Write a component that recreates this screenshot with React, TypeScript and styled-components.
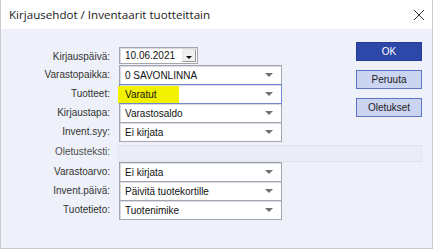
import { Fragment } from 'react';
import styled, { createGlobalStyle } from 'styled-components';

const GlobalStyle = createGlobalStyle`
  html, body {
    margin: 0;
    padding: 0;
    background: #ffffff;
  }
`;

const Window = styled.div`
  width: 431px;
  height: 248px;
  border: 1px solid #c9cbd1;
  border-top: none;
  background: #eef1f9;
  display: flex;
  flex-direction: column;
  font-family: 'Liberation Sans', Arial, sans-serif;
`;

const TitleBar = styled.div`
  height: 29px;
  background: #ffffff;
  display: flex;
  align-items: center;
  justify-content: space-between;
  padding: 0 7px 0 8px;
  flex-shrink: 0;
`;

const Title = styled.span`
  font-family: 'Open Sans', 'Noto Sans', sans-serif;
  font-size: 11.6px;
  color: #1a1a1a;
`;

const CloseIcon = () => (
  <svg width="12" height="12" viewBox="0 0 12 12">
    <path d="M1 1 L11 11 M11 1 L1 11" stroke="#333" strokeWidth="1" fill="none" />
  </svg>
);

const Form = styled.div`
  display: grid;
  grid-template-columns: 118px 163px 1fr;
  grid-template-rows: 18px 19px 19px 19px 19px 21px 19px 19px 19px;
  padding: 18px 10px 0 0;
`;

const Label = styled.div<{ $muted?: boolean; $row: number }>`
  grid-column: 1;
  grid-row: ${(p) => p.$row};
  display: flex;
  align-items: center;
  justify-content: flex-end;
  padding-right: 9px;
  font-size: 10px;
  color: ${(p) => (p.$muted ? '#4d4d4d' : '#333333')};
`;

const Select = styled.div<{ $focus?: boolean; $row: number }>`
  grid-column: 2;
  grid-row: ${(p) => p.$row};
  box-sizing: border-box;
  height: 20px;
  background: #ffffff;
  border: 1px solid ${(p) => (p.$focus ? '#6f86d2' : '#a3a6ae')};
  box-shadow: inset 1px 1px 0 #d9dbe0;
  display: flex;
  align-items: center;
  justify-content: space-between;
  padding: 0 8px 0 5px;
  font-size: 10px;
  color: #111;
  position: relative;
  z-index: ${(p) => (p.$focus ? 2 : 1)};
`;

const Arrow = styled.span`
  width: 0;
  height: 0;
  border-left: 4px solid transparent;
  border-right: 4px solid transparent;
  border-top: 4px solid #707070;
`;

const Highlight = styled.span`
  background: #f2f200;
  margin-left: -7px;
  padding: 3px 22px 3px 7px;
  margin-top: 1px;
`;

const DateBox = styled.div`
  grid-column: 2;
  grid-row: 1;
  box-sizing: border-box;
  width: 79px;
  height: 17px;
  background: #ffffff;
  border: 1px solid #a3a6ae;
  box-shadow: inset 1px 1px 0 #d9dbe0;
  display: flex;
  align-items: center;
  justify-content: space-between;
  padding: 0 1px 0 5px;
  font-size: 10px;
  color: #111;
`;

const DateButton = styled.span`
  box-sizing: border-box;
  width: 14px;
  height: 13px;
  background: #f0f0f0;
  border: 1px solid #9a9a9a;
  border-top-color: #e8e8e8;
  border-left-color: #e8e8e8;
  display: flex;
  align-items: center;
  justify-content: center;
`;

const SmallArrow = styled.span`
  width: 0;
  height: 0;
  margin-top: 3px;
  border-left: 3px solid transparent;
  border-right: 3px solid transparent;
  border-top: 3px solid #111;
`;

const TextField = styled.div`
  grid-column: 2 / 4;
  grid-row: 6;
  margin: 4px 0 0 -1px;
  box-sizing: border-box;
  height: 17px;
  background: #eaedf5;
  border: 1px solid #dfe3ee;
`;

const Buttons = styled.div`
  grid-column: 3;
  grid-row: 1 / span 5;
  justify-self: end;
  align-self: start;
  margin-top: -5px;
  display: flex;
  flex-direction: column;
  gap: 9px;
`;

const Button = styled.div<{ $primary?: boolean }>`
  box-sizing: border-box;
  width: 66px;
  height: 19px;
  display: flex;
  align-items: center;
  justify-content: center;
  font-size: 10px;
  background: ${(p) => (p.$primary ? '#2d48a9' : '#cbd4f1')};
  border: 1px solid ${(p) => (p.$primary ? '#223c98' : '#5d74c6')};
  color: ${(p) => (p.$primary ? '#ffffff' : '#222')};
`;

const selects = [
  { row: 2, label: 'Varastopaikka:', value: '0 SAVONLINNA' },
  { row: 3, label: 'Tuotteet:', value: 'Varatut', focus: true },
  { row: 4, label: 'Kirjaustapa:', value: 'Varastosaldo' },
  { row: 5, label: 'Invent.syy:', value: 'Ei kirjata' },
  { row: 7, label: 'Varastoarvo:', value: 'Ei kirjata' },
  { row: 8, label: 'Invent.päivä:', value: 'Päivitä tuotekortille' },
  { row: 9, label: 'Tuotetieto:', value: 'Tuotenimike' },
];

const App = () => {
  return (
    <>
      <GlobalStyle />
      <Window>
        <TitleBar>
          <Title>Kirjausehdot / Inventaarit tuotteittain</Title>
          <CloseIcon />
        </TitleBar>
        <Form>
          <Label $row={1}>Kirjauspäivä:</Label>
          <DateBox>
            10.06.2021
            <DateButton>
              <SmallArrow />
            </DateButton>
          </DateBox>
          {selects.map((s) => (
            <Fragment key={s.label}>
              <Label $row={s.row}>{s.label}</Label>
              <Select $row={s.row} $focus={s.focus}>
                {s.focus ? <Highlight>{s.value}</Highlight> : <span>{s.value}</span>}
                <Arrow />
              </Select>
            </Fragment>
          ))}
          <Label $row={6} $muted>
            Oletusteksti:
          </Label>
          <TextField />
          <Buttons>
            <Button $primary>OK</Button>
            <Button>Peruuta</Button>
            <Button>Oletukset</Button>
          </Buttons>
        </Form>
      </Window>
    </>
  );
};

export default App;
